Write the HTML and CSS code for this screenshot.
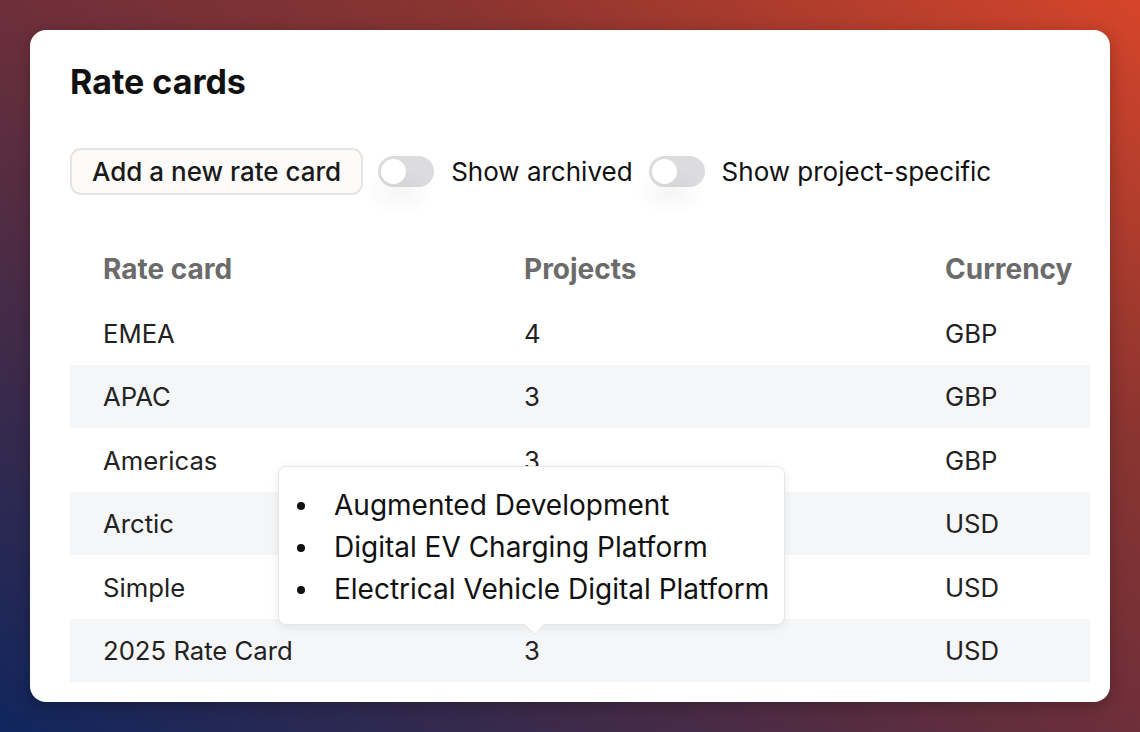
FILE: index.html
```html
<!DOCTYPE html>
<html lang="en">
<head>
<meta charset="utf-8">
<title>Rate cards</title>
<link rel="stylesheet" href="styles.css">
</head>
<body>
<div class="card">
  <h1 class="title">Rate cards</h1>
  <div class="toolbar">
    <button class="btn">Add a new rate card</button>
    <label class="switch-group"><span class="switch"><span class="knob"></span></span><span class="switch-label">Show archived</span></label>
    <label class="switch-group"><span class="switch"><span class="knob"></span></span><span class="switch-label">Show project-specific</span></label>
  </div>
  <div class="table">
    <div class="row head"><div class="cell">Rate card</div><div class="cell">Projects</div><div class="cell">Currency</div></div>
    <div class="row"><div class="cell">EMEA</div><div class="cell">4</div><div class="cell">GBP</div></div>
    <div class="row alt"><div class="cell">APAC</div><div class="cell">3</div><div class="cell">GBP</div></div>
    <div class="row"><div class="cell">Americas</div><div class="cell">3</div><div class="cell">GBP</div></div>
    <div class="row alt"><div class="cell">Arctic</div><div class="cell">3</div><div class="cell">USD</div></div>
    <div class="row"><div class="cell">Simple</div><div class="cell">3</div><div class="cell">USD</div></div>
    <div class="row alt"><div class="cell">2025 Rate Card</div><div class="cell">3</div><div class="cell">USD</div></div>
    <div class="tooltip">
      <ul>
        <li>Augmented Development</li>
        <li>Digital EV Charging Platform</li>
        <li>Electrical Vehicle Digital Platform</li>
      </ul>
    </div>
  </div>
</div>
</body>
</html>
```
FILE: styles.css
```css
* { box-sizing: border-box; }
html, body { margin: 0; height: 100%; }
body {
  width: 1140px;
  height: 732px;
  padding: 30px;
  font-family: Inter, "Noto Sans", sans-serif;
  background: linear-gradient(to top right, #10265e 0%, #3c2a4a 25%, #6e2f3a 50%, #8a3430 70%, #d6452a 100%);
  overflow: hidden;
}
.card {
  background: #fff;
  border-radius: 16px;
  height: 672px;
  padding: 32px 20px 0 40px;
  box-shadow: 0 4px 16px rgba(0,0,0,0.25);
}
.title {
  margin: 0;
  font-size: 34px;
  font-weight: 700;
  color: #111;
  line-height: 40px;
}
.toolbar {
  display: flex;
  align-items: center;
  margin-top: 46px;
  height: 47px;
}
.btn {
  font-family: Inter, sans-serif;
  font-size: 26px;
  font-weight: 500;
  color: #1a1a1a;
  background: #fcfbf9;
  border: 2px solid #e4e4e4;
  border-radius: 11px;
  height: 47px;
  padding: 0 20px;
  margin-right: 15px;
}
.switch-group {
  display: flex;
  align-items: center;
  margin-right: 16px;
}
.switch {
  width: 56px;
  height: 31px;
  border-radius: 16px;
  background: #dcdcdf;
  padding: 3px;
  display: flex;
  position: relative;
}
.switch::after {
  content: "";
  position: absolute;
  left: -14px;
  top: 10px;
  width: 70px;
  height: 50px;
  border-radius: 50%;
  background: radial-gradient(closest-side, rgba(0,0,0,0.04), rgba(0,0,0,0));
}
.knob {
  width: 25px;
  height: 25px;
  border-radius: 50%;
  background: #fff;
  position: relative;
  z-index: 1;
}
.switch-label {
  margin-left: 17px;
  font-size: 26px;
  color: #111;
}
.table {
  margin-top: 42px;
  position: relative;
  width: 1020px;
}
.row {
  display: grid;
  grid-template-columns: 421px 421px 1fr;
  height: 64px;
  align-items: center;
  font-size: 25.7px;
  color: #222;
}
.row.alt { background: #f5f6f8; height: 63px; }
.row.head { font-weight: 700; font-size: 28px; color: #6b6b6b; height: 64px; }
.cell { padding-left: 33px; }
.tooltip {
  position: absolute;
  left: 208px;
  top: 229px;
  width: 507px;
  height: 159px;
  background: #fff;
  border: 1px solid #e6e6e6;
  border-radius: 8px;
  box-shadow: 0 2px 10px rgba(0,0,0,0.08);
}
.tooltip::after {
  content: "";
  position: absolute;
  left: 248px;
  bottom: -8px;
  width: 14px;
  height: 14px;
  background: #fff;
  transform: rotate(45deg);
  border-right: 1px solid #e6e6e6;
  border-bottom: 1px solid #e6e6e6;
}
.tooltip ul {
  list-style: none;
  margin: 0;
  padding: 17px 0 0 55px;
  font-size: 28px;
  line-height: 42px;
  color: #111;
}
.tooltip li { position: relative; }
.tooltip li::before {
  content: "";
  position: absolute;
  left: -37px;
  top: 18px;
  width: 8px;
  height: 8px;
  border-radius: 50%;
  background: #111;
}
```
